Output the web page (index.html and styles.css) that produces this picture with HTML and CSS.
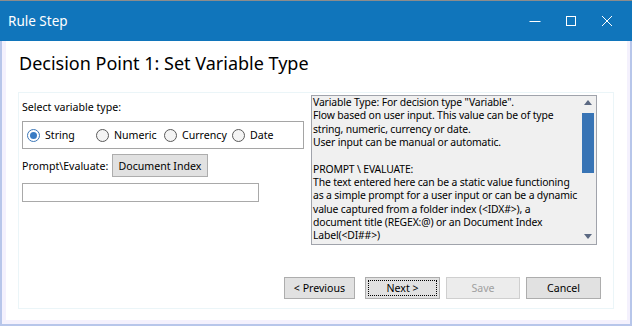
FILE: index.html
```html
<!DOCTYPE html>
<html lang="en">
<head>
  <meta charset="UTF-8">
  <title>Rule Step</title>
  <link rel="stylesheet" href="styles.css">
</head>
<body>
  <div class="window">
    <div class="titlebar">
      <span class="title">Rule Step</span>
      <div class="controls">
        <span class="ctl">
          <svg width="12" height="12" viewBox="0 0 12 12"><path d="M0.5 6.5h11" stroke="#fff" stroke-width="1"/></svg>
        </span>
        <span class="ctl">
          <svg width="12" height="12" viewBox="0 0 12 12"><rect x="1.5" y="1.5" width="9" height="9" fill="none" stroke="#fff" stroke-width="1"/></svg>
        </span>
        <span class="ctl">
          <svg width="12" height="12" viewBox="0 0 12 12"><path d="M1 1L11 11M11 1L1 11" stroke="#fff" stroke-width="1"/></svg>
        </span>
      </div>
    </div>

    <div class="frame">
      <div class="content">
        <h1 class="heading">Decision Point 1: Set Variable Type</h1>

        <div class="panel">
          <div class="top">
            <div class="form">
              <div class="label">Select variable type:</div>
              <div class="radio-box">
                <label class="radio checked"><span class="dot"></span>String</label>
                <label class="radio"><span class="dot"></span>Numeric</label>
                <label class="radio"><span class="dot"></span>Currency</label>
                <label class="radio"><span class="dot"></span>Date</label>
              </div>
              <div class="prompt-row">
                <span class="prompt-label">Prompt\Evaluate:</span>
                <button class="btn doc-btn">Document Index</button>
              </div>
              <div class="text-input"></div>
            </div>

            <div class="help">
              <div class="help-text">Variable Type: For decision type "Variable".
Flow based on user input. This value can be of type
string, numeric, currency or date.
User input can be manual or automatic.

PROMPT \ EVALUATE:
The text entered here can be a static value functioning
as a simple prompt for a user input or can be a dynamic
value captured from a folder index (&lt;IDX#&gt;), a
document title (REGEX:@) or an Document Index
Label(&lt;DI##&gt;)</div>
              <div class="scrollbar">
                <span class="arrow up"></span>
                <span class="thumb"></span>
                <span class="track"></span>
                <span class="arrow down"></span>
              </div>
            </div>
          </div>

          <div class="buttons">
            <button class="btn prev">&lt; Previous</button>
            <button class="btn next"><span class="focus">Next &gt;</span></button>
            <button class="btn" disabled>Save</button>
            <button class="btn">Cancel</button>
          </div>
        </div>
      </div>
    </div>
  </div>
</body>
</html>
```

FILE: styles.css
```css
body {
  margin: 0;
  font-family: "Noto Sans", sans-serif;
  font-size: 10.6px;
  color: #000;
}

.window {
  width: 632px;
  height: 326px;
  display: flex;
  flex-direction: column;
  border-top: 1px solid #8c8c8c;
  box-sizing: border-box;
}

.titlebar {
  height: 40px;
  background-color: #1075bb;
  color: #fff;
  display: flex;
  align-items: center;
  justify-content: space-between;
  padding-left: 8px;
}

.title {
  font-size: 13.5px;
  margin-top: -1px;
}

.controls {
  display: flex;
  padding-right: 7px;
}

.ctl {
  width: 36px;
  height: 40px;
  display: flex;
  align-items: center;
  justify-content: center;
}

.frame {
  flex: 1;
  display: flex;
  background-color: #f4f1fd;
  border: 2px solid #b7c6ea;
  border-top: none;
  padding: 0 3px 4px 4px;
}

.content {
  flex: 1;
  background-color: #fff;
  display: flex;
  flex-direction: column;
  padding: 0 13px 11px 12px;
}

.heading {
  font-size: 18px;
  font-weight: normal;
  line-height: 26px;
  margin: 0;
  padding: 9px 0 16px 1px;
}

.panel {
  flex: 1;
  border: 1px solid #ebf5f8;
  display: flex;
  flex-direction: column;
  padding: 0 12px 9px 3px;
}

.top {
  display: flex;
  gap: 7px;
}

.form {
  width: 282px;
}

.label {
  line-height: 15px;
  margin-top: 7px;
}

.radio-box {
  margin-top: 6px;
  height: 28px;
  box-sizing: border-box;
  border: 1px solid #a5a5a5;
  display: grid;
  grid-template-columns: 69px 68px 68px auto;
  align-items: center;
  padding-left: 4px;
}

.radio {
  display: flex;
  align-items: center;
  gap: 5px;
}

.dot {
  width: 13px;
  height: 13px;
  box-sizing: border-box;
  border-radius: 50%;
  border: 1px solid #5a5a5a;
  background-color: #f4f4f4;
  display: flex;
  align-items: center;
  justify-content: center;
}

.radio.checked .dot {
  border-color: #3c77b8;
  background-color: #fff;
}

.radio.checked .dot::after {
  content: '';
  width: 7px;
  height: 7px;
  border-radius: 50%;
  background-color: #3a7cc4;
}

.prompt-row {
  margin-top: 5px;
  display: flex;
  align-items: center;
}

.prompt-label {
  width: 90px;
}

.btn {
  font-family: "Noto Sans", sans-serif;
  font-size: 10.6px;
  height: 23px;
  padding: 0;
  background-color: #e1e1e1;
  border: 1px solid #adadad;
  color: #000;
}

.doc-btn {
  width: 96px;
}

.text-input {
  margin-top: 6px;
  width: 237px;
  height: 19px;
  box-sizing: border-box;
  border: 1px solid #a9a9a9;
  background-color: #fff;
}

.help {
  margin-top: 2px;
  width: 286px;
  height: 150px;
  box-sizing: border-box;
  border: 1px solid #a0a3ab;
  background-color: #f0f0f0;
  display: flex;
}

.help-text {
  flex: 1;
  white-space: pre;
  font-size: 10.4px;
  letter-spacing: -0.15px;
  line-height: 13.33px;
  padding-left: 1px;
  overflow: hidden;
}

.scrollbar {
  width: 17px;
  display: flex;
  flex-direction: column;
  align-items: center;
}

.arrow {
  width: 0;
  height: 0;
  border-left: 4px solid transparent;
  border-right: 4px solid transparent;
}

.arrow.up {
  margin-top: 4px;
  border-bottom: 5px solid #5b6982;
}

.arrow.down {
  margin-bottom: 5px;
  border-top: 5px solid #5b6982;
}

.thumb {
  margin-top: 8px;
  width: 12px;
  height: 60px;
  background-color: #3874b5;
}

.track {
  flex: 1;
}

.buttons {
  margin-top: auto;
  display: flex;
  justify-content: flex-end;
  gap: 6px;
}

.buttons .btn {
  width: 75px;
  height: 22px;
}

.buttons .prev {
  width: 71px;
  margin-right: 4px;
}

.btn:disabled {
  width: 74px;
  color: #a0a0a0;
  background-color: #ececec;
  border-color: #cfcfcf;
}

.next {
  display: flex;
  align-items: center;
  justify-content: center;
  padding: 2px;
}

.focus {
  flex: 1;
  align-self: stretch;
  border: 1px dotted #000;
  display: flex;
  align-items: center;
  justify-content: center;
}
```
